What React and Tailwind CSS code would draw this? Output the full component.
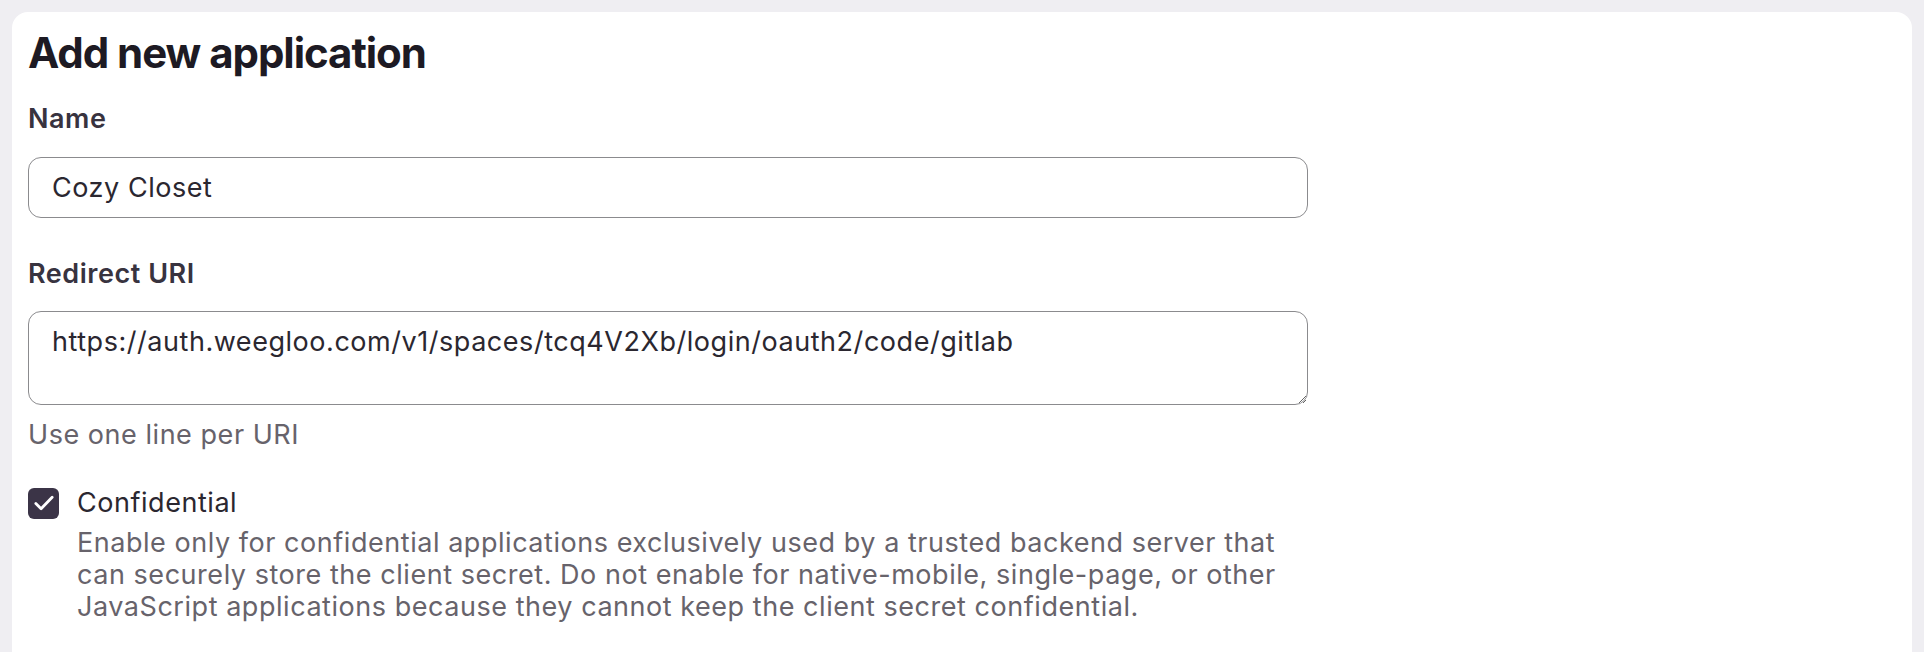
import { useState } from 'react';

export default function App() {
  const [name, setName] = useState('Cozy Closet');
  const [uris, setUris] = useState('https://auth.weegloo.com/v1/spaces/tcq4V2Xb/login/oauth2/code/gitlab');
  const [confidential, setConfidential] = useState(true);

  return (
    <div className="min-h-screen bg-[#efeef2] px-[12px] pt-[12px] font-['Inter',sans-serif]">
      <div className="min-h-[640px] rounded-t-[16px] bg-white px-[16px] pt-[16px]">
        <h1 className="text-[42px] font-bold leading-[50px] tracking-[-0.025em] text-[#1d1a23]">
          Add new application
        </h1>

        <div className="flex max-w-[1280px] flex-col">
          <label className="mt-[25px] text-[27px] font-semibold leading-[32px] tracking-[0.02em] text-[#38333f]">Name</label>
          <input
            value={name}
            onChange={(e) => setName(e.target.value)}
            className="mt-[22px] h-[61px] rounded-[13px] border-[1.5px] border-[#8b8b8e] px-[23px] text-[27px] tracking-[0.02em] text-[#2b2730] outline-none"
          />

          <label className="mt-[40px] text-[27px] font-semibold leading-[32px] tracking-[0.02em] text-[#38333f]">Redirect URI</label>
          <textarea
            value={uris}
            onChange={(e) => setUris(e.target.value)}
            className="mt-[21px] h-[94px] resize-y rounded-[13px] border-[1.5px] border-[#8b8b8e] px-[23px] pt-[14px] text-[27px] leading-[32px] tracking-[0.02em] text-[#2b2730] outline-none"
          />
          <p className="mt-[14px] text-[27px] leading-[32px] tracking-[0.02em] text-[#67636b]">Use one line per URI</p>

          <label className="mt-[36px] flex items-center gap-[18px]">
            <button
              type="button"
              onClick={() => setConfidential(!confidential)}
              className="flex h-[31px] w-[31px] items-center justify-center rounded-[6px] bg-[#3b3447]"
            >
              {confidential && (
                <svg viewBox="0 0 24 24" className="h-[28px] w-[28px]" fill="none" stroke="white" strokeWidth="2.4" strokeLinecap="round" strokeLinejoin="round">
                  <path d="M5 12.5l4.5 4.5L19 7" />
                </svg>
              )}
            </button>
            <span className="text-[27px] leading-[32px] tracking-[0.02em] text-[#2b2730]">Confidential</span>
          </label>
          <p className="ml-[49px] mt-[8px] text-[27px] leading-[32px] tracking-[0.02em] text-[#67636b]">
            Enable only for confidential applications exclusively used by a trusted backend server that can securely
            store the client secret. Do not enable for native-mobile, single-page, or other JavaScript applications
            because they cannot keep the client secret confidential.
          </p>
        </div>
      </div>
    </div>
  );
}
